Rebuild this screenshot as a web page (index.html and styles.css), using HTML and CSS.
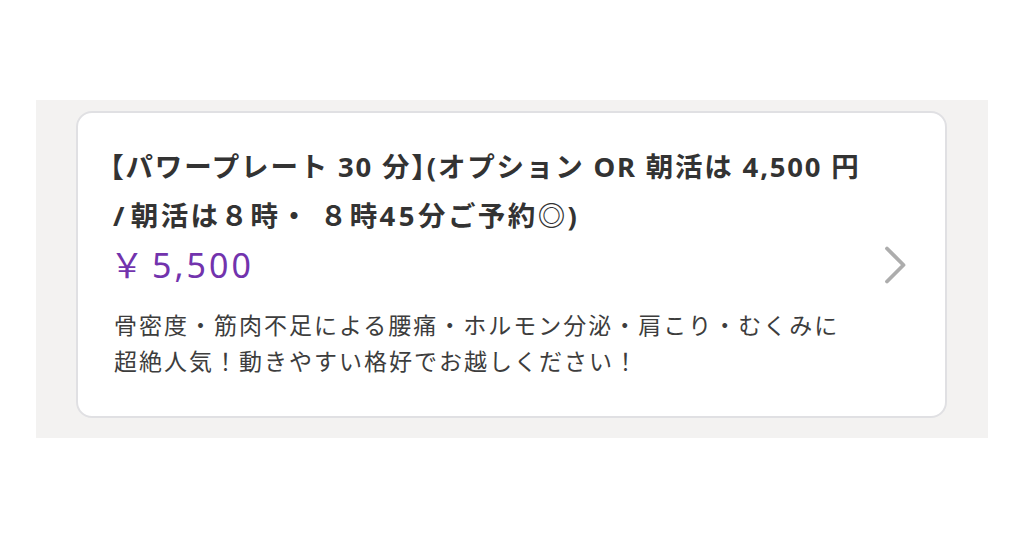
FILE: index.html
```html
<!DOCTYPE html>
<html lang="ja">
<head>
<meta charset="utf-8">
<link rel="stylesheet" href="styles.css">
</head>
<body>
<div class="panel">
  <div class="card">
    <div class="content">
      <div class="title"><span class="br">【</span>パワープレート 30 分<span class="br">】</span>(オプション OR 朝活は 4,500 円<br><span class="l2"><span class="sl">/</span>朝活は８時・ ８時<span class="num">45</span>分ご予約◎)</span></div>
      <div class="price"><span class="yen">￥</span>5,500</div>
      <div class="desc">骨密度・筋肉不足による腰痛・ホルモン分泌・肩こり・むくみに<br>超絶人気！動きやすい格好でお越しください！</div>
    </div>
    <svg class="chev" width="24" height="40" viewBox="0 0 24 40"><path d="M4 3.5 L20.5 20 L4 36.5" fill="none" stroke="#adadad" stroke-width="3.8" stroke-linecap="round" stroke-linejoin="round"/></svg>
  </div>
</div>
</body>
</html>
```
FILE: styles.css
```css
html, body { margin: 0; padding: 0; background: #fff; }
body { font-family: "Noto Sans CJK JP", "Noto Sans", sans-serif; }
.panel {
  margin: 100px 0 0 36px;
  width: 952px;
  height: 338px;
  background: #f3f2f1;
  padding: 11px 41px 0 40px;
  box-sizing: border-box;
}
.card {
  background: #fff;
  border: 2px solid #e0e0e3;
  border-radius: 16px;
  height: 307px;
  box-sizing: border-box;
  display: flex;
  padding: 0 38px 0 32px;
}
.content { flex: 1; padding-top: 28px; }
.title {
  font-family: "Noto Sans", "Noto Sans CJK JP", sans-serif;
  font-size: 27.5px;
  font-weight: bold;
  color: #333;
  line-height: 49px;
  letter-spacing: 1.8px;
  white-space: nowrap;
}
.br {
  font-family: "Noto Sans CJK JP", sans-serif;
  font-feature-settings: "halt";
}
.l2 { letter-spacing: 2.4px; }
.sl { margin: 0 4px 0 3px; }
.num { letter-spacing: 3.5px; }
.price {
  font-family: "Noto Sans", sans-serif;
  font-size: 34px;
  color: #7233ad;
  line-height: 40px;
  letter-spacing: 3px;
  margin: 4px 0 21px 0;
}
.yen {
  font-family: "Noto Sans CJK JP", sans-serif;
  letter-spacing: 0;
  margin-right: 8px;
}
.desc {
  font-size: 23px;
  color: #3d3d3d;
  line-height: 36px;
  letter-spacing: 2px;
  padding-left: 4px;
}
.chev { flex: none; align-self: center; }
```
